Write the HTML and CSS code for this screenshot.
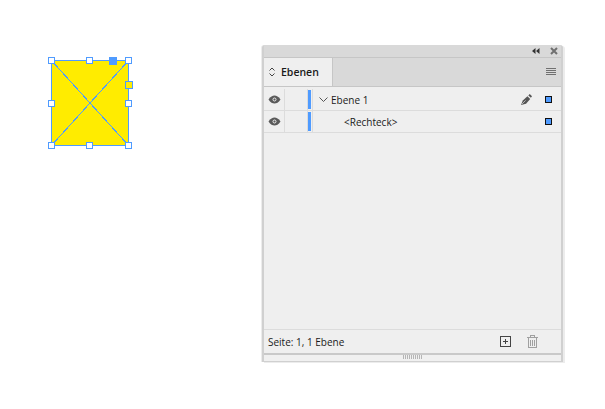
FILE: index.html
```html
<!DOCTYPE html>
<html lang="de">
<head>
    <meta charset="UTF-8">
    <meta name="viewport" content="width=device-width, initial-scale=1.0">
    <title>Ebenen</title>
    <link rel="stylesheet" href="styles.css">
</head>
<body>
    <div class="arbeitsflaeche">
        <div class="rechteck">
            <svg class="rechteck-x" width="78" height="86" viewBox="0 0 78 86" shape-rendering="crispEdges">
                <line x1="0" y1="0" x2="78" y2="86"/>
                <line x1="78" y1="0" x2="0" y2="86"/>
            </svg>
            <span class="griff griff-ol"></span>
            <span class="griff griff-om"></span>
            <span class="griff griff-or"></span>
            <span class="griff griff-ml"></span>
            <span class="griff griff-mr"></span>
            <span class="griff griff-ul"></span>
            <span class="griff griff-um"></span>
            <span class="griff griff-ur"></span>
            <span class="griff-blau"></span>
            <span class="griff-gelb"></span>
        </div>
    </div>

    <div class="panel">
        <div class="titelleiste">
            <svg width="8" height="6" viewBox="0 0 8 6" class="icon-einklappen">
                <path d="M3.500 0v6L0 3zM7.500 0v6L4 3z"/>
            </svg>
            <svg width="8" height="8" viewBox="0 0 8 8" class="icon-schliessen">
                <path d="M1 1l6 6M7 1L1 7"/>
            </svg>
        </div>
        <div class="tableiste">
            <div class="tab">
                <svg width="6" height="10" viewBox="0 0 6 10" class="icon-sortieren">
                    <path d="M.5 3.500L3 1l2.500 2.500M.5 6.500L3 9l2.500-2.500"/>
                </svg>
                <span>Ebenen</span>
            </div>
            <svg width="10" height="8" viewBox="0 0 10 8" class="icon-menue" shape-rendering="crispEdges">
                <path d="M0 .5h10M0 2.500h10M0 4.500h10M0 6.500h10"/>
            </svg>
        </div>

        <div class="liste">
            <div class="zeile">
                <div class="spalte-auge">
                    <svg width="13" height="9" viewBox="0 0 13 9" class="icon-auge">
                        <path d="M.5 4.500C2.500 1.500 4.500.5 6.500.5s4 1 6 4c-2 3-4 4-6 4s-4-1-6-4z"/>
                        <circle cx="6.500" cy="4.500" r="1.500"/>
                    </svg>
                </div>
                <div class="spalte-sperre"></div>
                <div class="spalte-farbe"><span class="farbbalken"></span></div>
                <div class="zeile-inhalt">
                    <svg width="9" height="6" viewBox="0 0 9 6" class="icon-pfeil">
                        <path d="M.5 .5L4.500 4.500 8.500 .5"/>
                    </svg>
                    <span class="ebene-name">Ebene 1</span>
                    <svg width="11" height="11" viewBox="0 0 12 12" class="icon-stift">
                        <path d="M0 12l2-5 5-4.500 3 3L5.500 10.500z"/>
                        <path d="M8 1.500L9.500 0 12 2.500 10.800 4.200z"/>
                        <path class="stift-schlitz" d="M1 11l4-4"/>
                    </svg>
                    <span class="auswahl"></span>
                </div>
            </div>
            <div class="zeile">
                <div class="spalte-auge">
                    <svg width="13" height="9" viewBox="0 0 13 9" class="icon-auge">
                        <path d="M.5 4.500C2.500 1.500 4.500.5 6.500.5s4 1 6 4c-2 3-4 4-6 4s-4-1-6-4z"/>
                        <circle cx="6.500" cy="4.500" r="1.500"/>
                    </svg>
                </div>
                <div class="spalte-sperre"></div>
                <div class="spalte-farbe"><span class="farbbalken"></span></div>
                <div class="zeile-inhalt zeile-kind">
                    <span class="ebene-name">&lt;Rechteck&gt;</span>
                    <span class="auswahl"></span>
                </div>
            </div>
        </div>

        <div class="fusszeile">
            <span>Seite: 1, 1 Ebene</span>
            <svg width="11" height="11" viewBox="0 0 11 11" class="icon-neu" shape-rendering="crispEdges">
                <path d="M.5 .5h10v10H.5zM5.500 3v5M3 5.500h5"/>
            </svg>
            <svg width="11" height="13" viewBox="0 0 11 13" class="icon-papierkorb" shape-rendering="crispEdges">
                <path d="M0 2.500h11M3.500 2V.5h4V2M1.500 3v9.500h8V3M3.500 4.500v6M5.500 4.500v6M7.500 4.500v6"/>
            </svg>
        </div>
        <div class="griffleiste">
            <span class="griffmuster"></span>
        </div>
    </div>
</body>
</html>
```

FILE: styles.css
```css
* {
    box-sizing: border-box;
}
body {
    margin: 0;
    width: 605px;
    height: 409px;
    display: flex;
    align-items: flex-start;
    background-color: #ffffff;
    font-family: "Open Sans", "Noto Sans", sans-serif;
    color: #1a1a1a;
    overflow: hidden;
}
svg {
    display: block;
    flex: none;
}

/* Arbeitsflaeche */
.arbeitsflaeche {
    width: 262px;
    padding: 60px 0 0 51px;
}
.rechteck {
    position: relative;
    width: 78px;
    height: 86px;
    background-color: #ffec00;
    border: 1px solid #4f9bff;
}
.rechteck-x {
    position: absolute;
    top: -1px;
    left: -1px;
}
.rechteck-x line {
    stroke: #4f9bff;
    stroke-width: 1;
}
.griff {
    position: absolute;
    width: 7px;
    height: 7px;
    background-color: #ffffff;
    border: 1px solid #4f9bff;
}
.griff-ol { top: -4px; left: -4px; }
.griff-om { top: -4px; left: 34px; }
.griff-or { top: -4px; left: 73px; }
.griff-ml { top: 39px; left: -4px; }
.griff-mr { top: 39px; left: 73px; }
.griff-ul { top: 81px; left: -4px; }
.griff-um { top: 81px; left: 34px; }
.griff-ur { top: 81px; left: 73px; }
.griff-blau {
    position: absolute;
    top: -4px;
    left: 57px;
    width: 8px;
    height: 8px;
    background-color: #4f9bff;
}
.griff-gelb {
    position: absolute;
    top: 20px;
    left: 73px;
    width: 8px;
    height: 8px;
    background-color: #ffec00;
    border: 1px solid #4f9bff;
}

/* Panel */
.panel {
    margin-top: 45px;
    width: 301px;
    height: 317px;
    display: flex;
    flex-direction: column;
    background-color: #efefef;
    border: 1px solid #d0d0d0;
    border-left-width: 2px;
    border-right-width: 2px;
    border-top: 0;
    border-radius: 3px 3px 0 0;
    box-shadow: 2px 1px 0 #ececec, -1px 0 0 #ececec;
}
.titelleiste {
    height: 13px;
    display: flex;
    align-items: center;
    justify-content: flex-end;
    gap: 10px;
    padding-right: 3px;
    background-color: #d9d9d9;
    border-bottom: 1px solid #c6c6c6;
}
.icon-einklappen path {
    fill: #333333;
}
.icon-schliessen path {
    fill: none;
    stroke: #707070;
    stroke-width: 2;
}
.tableiste {
    height: 29px;
    display: flex;
    align-items: center;
    justify-content: space-between;
    padding-right: 5px;
    background-color: #d9d9d9;
    border-bottom: 1px solid #c6c6c6;
}
.tab {
    width: 69px;
    height: 28px;
    display: flex;
    align-items: center;
    gap: 6px;
    padding-left: 5px;
    background-color: #efefef;
    border-right: 1px solid #c6c6c6;
    font-size: 10.5px;
    font-weight: 600;
}
.icon-sortieren path {
    fill: none;
    stroke: #444444;
}
.icon-menue path {
    stroke: #707070;
}

/* Ebenenliste */
.liste {
    flex: 1;
    padding-top: 2px;
}
.zeile {
    height: 22px;
    display: flex;
    border-bottom: 1px solid #dcdcdc;
}
.spalte-auge {
    width: 21px;
    display: flex;
    align-items: center;
    justify-content: center;
    border-right: 1px solid #dcdcdc;
}
.icon-auge path {
    fill: #5a5a5a;
}
.icon-auge circle {
    fill: #5a5a5a;
    stroke: #efefef;
}
.spalte-sperre {
    width: 23px;
    border-right: 1px solid #dcdcdc;
}
.spalte-farbe {
    width: 4px;
    display: flex;
    padding: 1px 0;
}
.farbbalken {
    width: 3px;
    background-color: #4f9bff;
}
.zeile-inhalt {
    flex: 1;
    display: flex;
    align-items: center;
    padding: 0 9px 0 6px;
    border-left: 1px solid #dcdcdc;
    font-size: 10px;
}
.zeile-kind {
    padding-left: 31px;
}
.ebene-name {
    flex: 1;
}
.icon-pfeil {
    margin-right: 3px;
}
.icon-pfeil path {
    fill: none;
    stroke: #555555;
}
.icon-stift {
    margin-right: 13px;
}
.icon-stift path {
    fill: #555555;
}
.icon-stift .stift-schlitz {
    fill: none;
    stroke: #efefef;
    stroke-width: .7;
}
.auswahl {
    width: 7px;
    height: 7px;
    background-color: #4f9bff;
    border: 1px solid #111111;
}

/* Fusszeile */
.fusszeile {
    height: 24px;
    flex: none;
    display: flex;
    align-items: center;
    padding: 0 23px 0 4px;
    border-top: 1px solid #dcdcdc;
    font-size: 10px;
}
.fusszeile span {
    flex: 1;
}
.icon-neu {
    margin-right: 16px;
}
.icon-neu path {
    fill: none;
    stroke: #444444;
}
.icon-papierkorb path {
    fill: none;
    stroke: #a0a0a0;
}
.griffleiste {
    height: 8px;
    flex: none;
    display: flex;
    justify-content: center;
    background-color: #f0f0f0;
    border-top: 2px solid #c9c9c9;
}
.griffmuster {
    width: 19px;
    height: 4px;
    background: repeating-linear-gradient(90deg, #b5b5b5 0 1px, transparent 1px 2px);
}
```
